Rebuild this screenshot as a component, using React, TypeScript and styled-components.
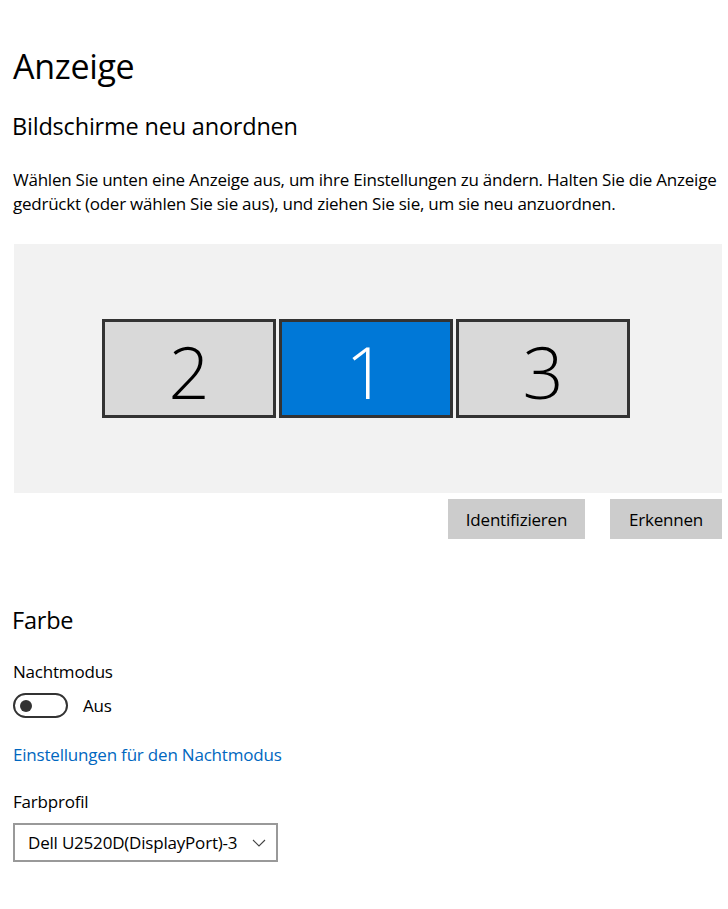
import React from "react";
import styled, { createGlobalStyle } from "styled-components";

const Global = createGlobalStyle`
  html, body {
    margin: 0;
    padding: 0;
    background: #ffffff;
  }
  body {
    font-family: "Open Sans", "Noto Sans", sans-serif;
    color: #000000;
  }
`;

const Page = styled.div`
  width: 728px;
  height: 909px;
  box-sizing: border-box;
  padding: 40px 6px 0 13px;
  overflow: hidden;
`;

const PageTitle = styled.h1`
  margin: 0;
  font-size: 34px;
  font-weight: 400;
  line-height: 52px;
  letter-spacing: -0.3px;
`;

const SectionTitle = styled.h2<{ gap?: number }>`
  margin: ${(p) => (p.gap ? p.gap : 0)}px 0 0 -1px;
  font-size: 23.5px;
  font-weight: 400;
  line-height: 32px;
  letter-spacing: -0.2px;
`;

const Text = styled.p`
  margin: 26px 0 0 0;
  font-size: 17px;
  line-height: 24px;
  letter-spacing: -0.24px;
  white-space: nowrap;
`;

const Canvas = styled.div`
  margin-top: 28px;
  margin-left: 1px;
  height: 249px;
  background: #f2f2f2;
  display: flex;
  align-items: center;
  padding-left: 88px;
  gap: 3px;
`;

const Monitor = styled.div<{ active?: boolean }>`
  width: 174px;
  height: 99px;
  box-sizing: border-box;
  border: 3px solid #333333;
  background: ${(p) => (p.active ? "#0078d7" : "#d9d9d9")};
  color: ${(p) => (p.active ? "#ffffff" : "#000000")};
  display: flex;
  align-items: center;
  justify-content: center;
  font-size: 72px;
  font-weight: 300;
  line-height: 1;
  padding-top: 4px;
`;

const ButtonRow = styled.div`
  display: flex;
  justify-content: flex-end;
  gap: 25px;
  margin-top: 6px;
`;

const Button = styled.button<{ w: number }>`
  width: ${(p) => p.w}px;
  height: 40px;
  border: none;
  background: #cccccc;
  font-family: inherit;
  font-size: 17px;
  color: #000000;
  padding: 0;
  letter-spacing: -0.2px;
`;

const Label = styled.div<{ gap: number }>`
  margin-top: ${(p) => p.gap}px;
  font-size: 17px;
  line-height: 22px;
  letter-spacing: -0.2px;
`;

const ToggleRow = styled.div`
  display: flex;
  align-items: center;
  gap: 15px;
  margin-top: 10px;
`;

const Toggle = styled.div`
  width: 55px;
  height: 25px;
  box-sizing: border-box;
  border: 2px solid #333333;
  border-radius: 13px;
  display: flex;
  align-items: center;
  padding-left: 5px;
`;

const Knob = styled.span`
  width: 12px;
  height: 12px;
  border-radius: 50%;
  background: #333333;
`;

const ToggleText = styled.span`
  font-size: 17px;
  letter-spacing: -0.2px;
`;

const Link = styled.a`
  display: block;
  margin-top: 26px;
  color: #0067c0;
  font-size: 17px;
  line-height: 22px;
  text-decoration: none;
  letter-spacing: -0.2px;
`;

const Select = styled.div`
  margin-top: 10px;
  width: 265px;
  height: 39px;
  box-sizing: border-box;
  border: 2px solid #999999;
  display: flex;
  align-items: center;
  justify-content: space-between;
  padding: 0 10px 0 13px;
  font-size: 17px;
  letter-spacing: -0.2px;
`;

const Chevron = () => (
  <svg width="14" height="8" viewBox="0 0 14 8" fill="none">
    <path d="M1 1 L7 7 L13 1" stroke="#444" strokeWidth="1.1" />
  </svg>
);

export default function App() {
  return (
    <Page>
      <Global />
      <PageTitle>Anzeige</PageTitle>
      <SectionTitle gap={18}>Bildschirme neu anordnen</SectionTitle>
      <Text>
        Wählen Sie unten eine Anzeige aus, um ihre Einstellungen zu ändern. Halten Sie die Anzeige
        <br />
        gedrückt (oder wählen Sie sie aus), und ziehen Sie sie, um sie neu anzuordnen.
      </Text>
      <Canvas>
        <Monitor>2</Monitor>
        <Monitor active>1</Monitor>
        <Monitor>3</Monitor>
      </Canvas>
      <ButtonRow>
        <Button w={137}>Identifizieren</Button>
        <Button w={112}>Erkennen</Button>
      </ButtonRow>
      <SectionTitle gap={65}>Farbe</SectionTitle>
      <Label gap={25}>Nachtmodus</Label>
      <ToggleRow>
        <Toggle>
          <Knob />
        </Toggle>
        <ToggleText>Aus</ToggleText>
      </ToggleRow>
      <Link href="#">Einstellungen für den Nachtmodus</Link>
      <Label gap={25}>Farbprofil</Label>
      <Select>
        <span>Dell U2520D(DisplayPort)-3</span>
        <Chevron />
      </Select>
    </Page>
  );
}
